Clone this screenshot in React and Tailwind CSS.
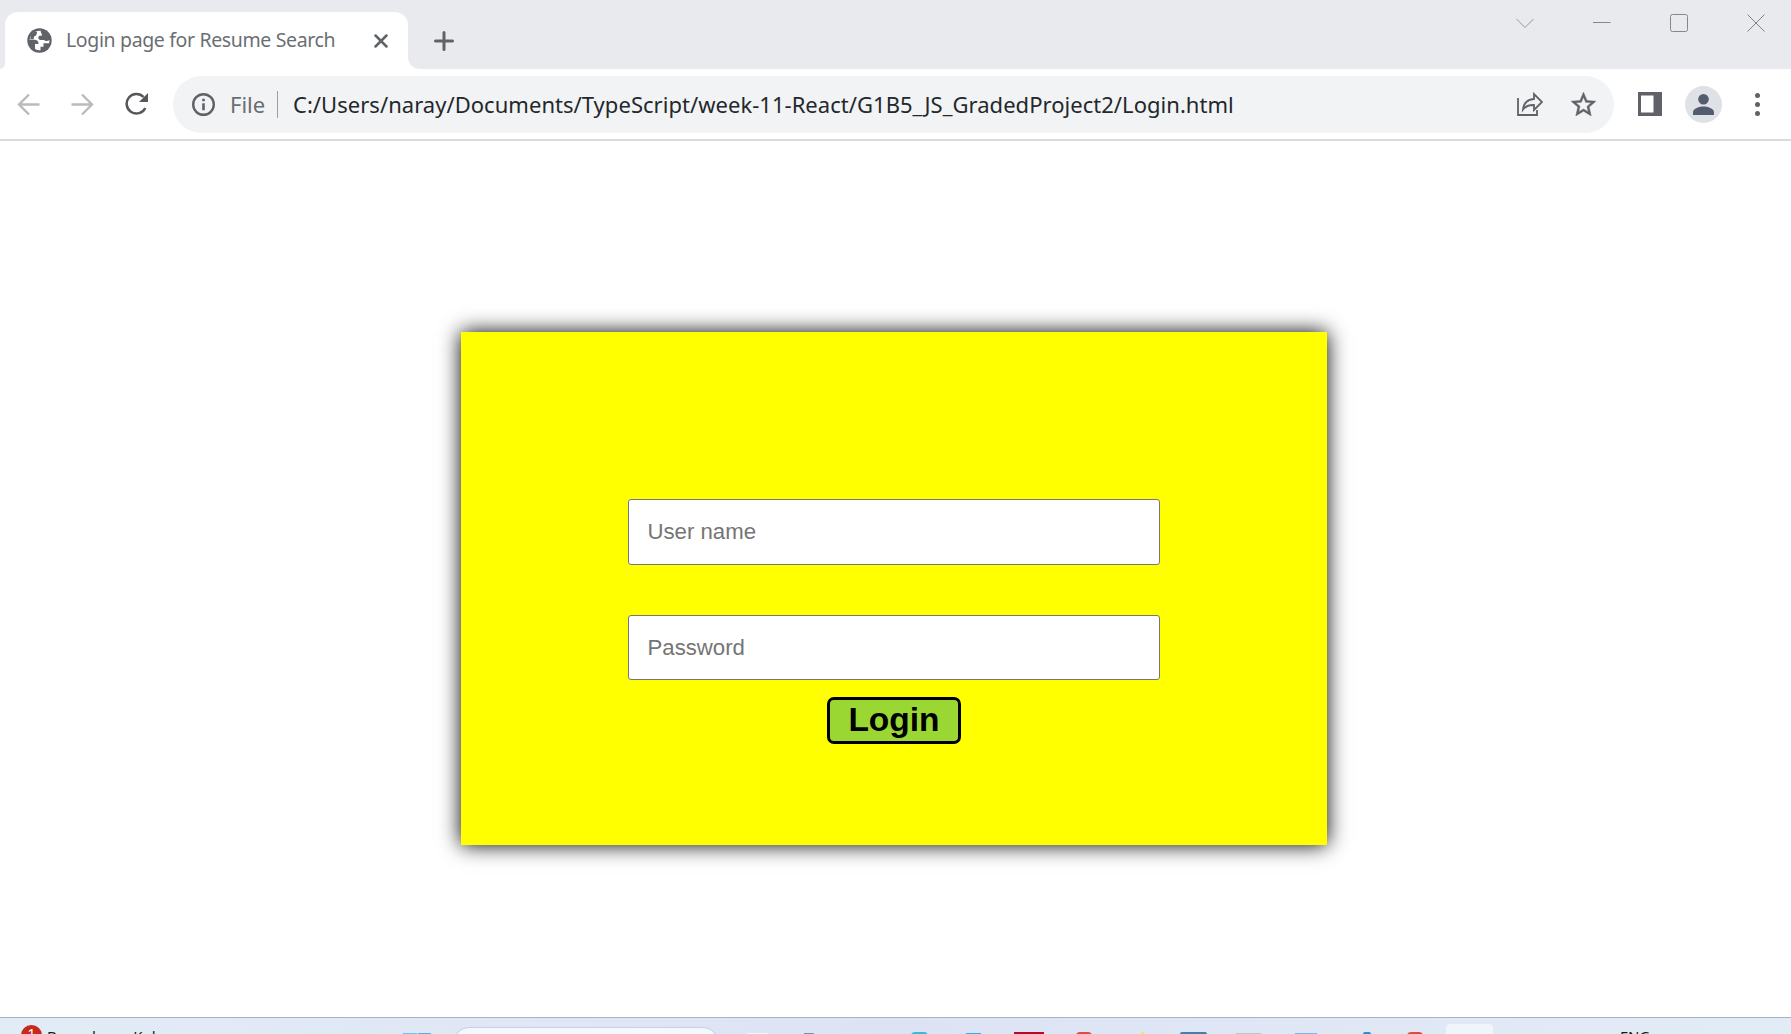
const TASKBAR_ICONS = [
  { id: "start-left", cls: "ml-[403px] mt-[15px] w-[14px] bg-[#6cc3f3]" },
  { id: "start-right", cls: "ml-px mt-[15px] w-[13px] bg-[#4fb0ea]" },
  { id: "search", cls: "ml-[21px] mt-[9px] w-[268px] rounded-t-[18px] border border-b-0 border-[#c9d0e2] bg-[#f4f7fd]" },
  { id: "taskview", cls: "ml-[27px] mt-[15px] w-[21px] bg-[#f3f6fc]" },
  { id: "chat", cls: "ml-[36px] mt-[15px] w-[10px] bg-[#8485c4]" },
  { id: "edge", cls: "ml-[97px] mt-[14px] w-[17px] rounded-t-[4px] bg-[#35bfcf]" },
  { id: "store", cls: "ml-[38px] mt-[15px] w-[15px] bg-[#2bb0ec]" },
  { id: "mcafee", cls: "ml-[33px] mt-[14px] w-[30px] bg-[#b80a20]" },
  { id: "chrome", cls: "ml-[32px] mt-[14px] w-[16px] rounded-t-[4px] bg-[#e04a3f]" },
  { id: "python", cls: "ml-[49px] mt-[14px] w-[3px] bg-[#f6e36c]" },
  { id: "pgadmin", cls: "ml-[36px] mt-[14px] w-[27px] rounded-t-[2px] bg-[#457fa6]" },
  { id: "notes", cls: "ml-[29px] mt-[15px] w-[25px] bg-[#bcc4d0]" },
  { id: "folder", cls: "ml-[34px] mt-[15px] w-[22px] bg-[#7db5ea]" },
  { id: "vscode", cls: "ml-[46px] mt-[14px] w-[8px] rounded-t-[2px] bg-[#2b8fd0]" },
  { id: "chrome-alt", cls: "ml-[36px] mt-[14px] w-[16px] rounded-t-[4px] bg-[#e04a3f]" },
  { id: "active", cls: "ml-[22px] mt-[5px] w-[49px] rounded-t-[5px] border border-b-0 border-[#e3e8f2] bg-[#f0f4fb]" },
];

function TabStrip() {
  return (
    <div className="flex h-[69px] shrink-0 bg-[#e8eaed]">
      <div className="flex h-full w-[5px] items-end bg-white">
        <div className="h-full w-full rounded-br-[8px] bg-[#e8eaed]" />
      </div>
      <div className="flex h-[57px] w-[403px] items-center self-end rounded-t-[13px] bg-white pl-[22px]">
        <svg width="25" height="25" viewBox="0 0 25 25">
          <circle cx="12.5" cy="12.5" r="12.2" fill="#5f6368" />
          <path
            d="M13.800 2.700C8 2.200 3.400 6.200 2.600 11.800h4.600c2.800 0 4.400 1.500 4.400 4.200H8v4.900c1.700 1 3.600 1.400 5.500 1.300v-3.400h3v-3.600h5.600c.3-1 .4-2 .3-3.100-1.600 1.200-4.200 1.300-5.300-.2h-3.800c-2-.2-2.700-2.900-.8-4.100h2.300V5.900c-.7-.9-1.200-2-1-3.200Z"
            fill="#fff"
          />
          <path d="M4.200 6.800 7.500 3.800l2.600.2-.8 3.200-2.500 1.600v2.400H3.200Z" fill="#5f6368" />
        </svg>
        <div className="ml-[14px] w-[290px] whitespace-nowrap pb-px font-['Noto_Sans',sans-serif] text-[19.500px] leading-[28px] tracking-[-0.36px] text-[#6b6e72]">
          Login page for Resume Search
        </div>
        <svg className="ml-[18px]" width="14" height="14" viewBox="0 0 14 14" stroke="#5f6368" strokeWidth="2.500" strokeLinecap="round">
          <path d="M1.500 1.500 12.500 12.500M12.500 1.500 1.500 12.500" />
        </svg>
      </div>
      <div className="flex h-full w-[12px] bg-white">
        <div className="h-full w-full rounded-bl-[12px] bg-[#e8eaed]" />
      </div>
      <svg className="mt-[31px] ml-[14px]" width="20" height="20" viewBox="0 0 20 20" stroke="#5f6368" strokeWidth="3" strokeLinecap="round">
        <path d="M10 1.500v17M1.500 10h17" />
      </svg>
      <div className="mt-[14px] mr-[26px] ml-auto flex h-[18px] items-center gap-[59px]">
        <svg width="18" height="18" viewBox="0 0 18 18" fill="none" stroke="#939598">
          <path d="m.5 5 8.500 8.500L17.500 5" />
        </svg>
        <svg width="18" height="18" viewBox="0 0 18 18">
          <path d="M0 8.500h17.500" stroke="#85878a" />
        </svg>
        <svg width="18" height="18" viewBox="0 0 18 18" fill="none" stroke="#85878a">
          <rect x=".5" y=".5" width="17" height="17" rx="2" />
        </svg>
        <svg width="18" height="18" viewBox="0 0 18 18" stroke="#808285">
          <path d="m.5.500 17 17M17.500.500l-17 17" />
        </svg>
      </div>
    </div>
  );
}

function Toolbar() {
  return (
    <div className="flex h-[72px] shrink-0 items-center border-b-2 border-[#dadada] pl-[17px]">
      <svg width="23" height="23" viewBox="0 0 23 23" fill="none" stroke="#b9bbbd" strokeWidth="2.400">
        <path d="M22.500 11.500H2.500M12 1.500l-10 10 10 10" />
      </svg>
      <svg className="ml-[31px]" width="23" height="23" viewBox="0 0 23 23" fill="none" stroke="#b9bbbd" strokeWidth="2.400">
        <path d="M.5 11.500h20M11 1.500l10 10-10 10" />
      </svg>
      <svg className="ml-[31px]" width="24" height="24" viewBox="0 0 24 24">
        <path d="M20.300 16A9.800 9.800 0 1 1 18.600 5" fill="none" stroke="#54585d" strokeWidth="2.500" />
        <path d="M23 1v9h-9Z" fill="#54585d" />
      </svg>
      <div className="ml-[24px] flex h-[57px] w-[1441px] items-center rounded-full bg-[#f1f3f4] pl-[19px]">
        <svg width="23" height="23" viewBox="0 0 23 23">
          <circle cx="11.500" cy="11.500" r="10.300" fill="none" stroke="#5f6368" strokeWidth="2.400" />
          <path d="M10.200 10.300h2.600v7h-2.600zM10.200 5.700h2.600v2.600h-2.600z" fill="#5f6368" />
        </svg>
        <div className="ml-[15px] w-[47px] whitespace-nowrap font-['Noto_Sans',sans-serif] text-[22px] leading-[30px] text-[#6a6d72]">File</div>
        <div className="h-[27px] w-px bg-[#9b9ea2]" />
        <div className="ml-[15px] whitespace-nowrap font-['Noto_Sans',sans-serif] text-[22px] leading-[30px] tracking-[0.035px] text-[#24272b]">
          C:/Users/naray/Documents/TypeScript/week-11-React/G1B5_JS_GradedProject2/Login.html
        </div>
        <div className="mr-[18px] ml-auto flex items-center gap-[28px]">
          <svg width="26" height="24" viewBox="0 0 26 24" fill="none" stroke="#5f6368" strokeWidth="1.800">
            <path d="M1 6v17h19v-5" />
            <path d="M6 17.500c.7-6.500 4.500-10 11-10.500V2l8 8-8 8v-5c-5-.2-8.500 1-11 4.500Z" />
          </svg>
          <svg width="25" height="24" viewBox="2 2 20 19" fill="#5f6368" stroke="#5f6368" strokeWidth=".35">
            <path d="M22 9.240l-7.190-.62L12 2 9.190 8.630 2 9.240l5.460 4.730L5.820 21 12 17.270 18.180 21l-1.630-7.030L22 9.240zM12 15.400l-3.760 2.270 1-4.280-3.320-2.880 4.380-.38L12 6.100l1.710 4.040 4.380.38-3.320 2.880 1 4.280L12 15.400z" />
          </svg>
        </div>
      </div>
      <svg className="ml-[24px]" width="24" height="24" viewBox="0 0 24 24">
        <path d="M0 0h24v24H0Z" fill="#5f6368" />
        <path d="M3 3.500h12.500v17H3Z" fill="#fff" />
      </svg>
      <svg className="ml-[23px]" width="37" height="37" viewBox="0 0 37 37">
        <circle cx="18.500" cy="18.500" r="18.500" fill="#dee1e6" />
        <g fill="#525c6e">
          <circle cx="18.500" cy="13.300" r="5.300" />
          <path d="M8 29v-2.700c0-3.800 6.500-5.700 10.500-5.700S29 22.500 29 26.300V29Z" />
        </g>
      </svg>
      <svg className="ml-[33px]" width="5" height="23" viewBox="0 0 5 23" fill="#5f6368">
        <circle cx="2.500" cy="2.500" r="2.500" />
        <circle cx="2.500" cy="11.500" r="2.500" />
        <circle cx="2.500" cy="20.500" r="2.500" />
      </svg>
    </div>
  );
}

function LoginCard() {
  return (
    <form className="mt-[191px] ml-[461px] flex h-[513px] w-[866px] flex-col items-center bg-[#ffff00] pt-[167px] font-['Liberation_Sans',Arial,sans-serif] shadow-[0_0_20px_#000000]">
      <input
        className="h-[66px] w-[532px] rounded-[3px] border border-[#767676] bg-white px-[18.500px] text-[22.200px] placeholder:text-[#757575]"
        placeholder="User name"
      />
      <input
        type="password"
        className="mt-[50px] h-[65px] w-[532px] rounded-[3px] border border-[#767676] bg-white px-[18.500px] text-[22.200px] placeholder:text-[#757575]"
        placeholder="Password"
      />
      <button
        type="button"
        className="mt-[17px] flex h-[47px] w-[134px] items-center justify-center rounded-[7px] border-[3px] border-black bg-[#9bd732] pb-[2px] text-[33.500px] leading-[38px] font-bold text-black"
      >
        Login
      </button>
    </form>
  );
}

function Taskbar() {
  return (
    <div className="flex h-[17px] shrink-0 overflow-hidden border-t border-[#a9b1c4] bg-linear-to-r from-[#e2ecf6] via-[#dde3f5] to-[#e2ecf6]">
      <div className="relative w-0">
        <div className="absolute top-[7px] left-[21px] h-[21px] w-[21px] rounded-full bg-[#c42b1c] text-center font-['Noto_Sans',sans-serif] text-[14px] leading-[18px] text-white">
          1
        </div>
        <div className="absolute top-[8px] left-[47px] whitespace-nowrap font-['Noto_Sans',sans-serif] text-[15px] leading-[20px] text-[#1b1b1b]">
          Bengaluru - Kol
        </div>
      </div>
      {TASKBAR_ICONS.map((icon) => (
        <div key={icon.id} className={`h-[40px] shrink-0 ${icon.cls}`} />
      ))}
      <div className="mt-[8px] ml-[126px] font-['Noto_Sans',sans-serif] text-[15px] leading-[20px] tracking-[-0.300px] text-[#1b1b1b]">ENG</div>
    </div>
  );
}

export default function App() {
  return (
    <div className="flex h-[1034px] w-[1791px] flex-col overflow-hidden bg-white">
      <TabStrip />
      <Toolbar />
      <main className="min-h-0 flex-1">
        <LoginCard />
      </main>
      <Taskbar />
    </div>
  );
}
